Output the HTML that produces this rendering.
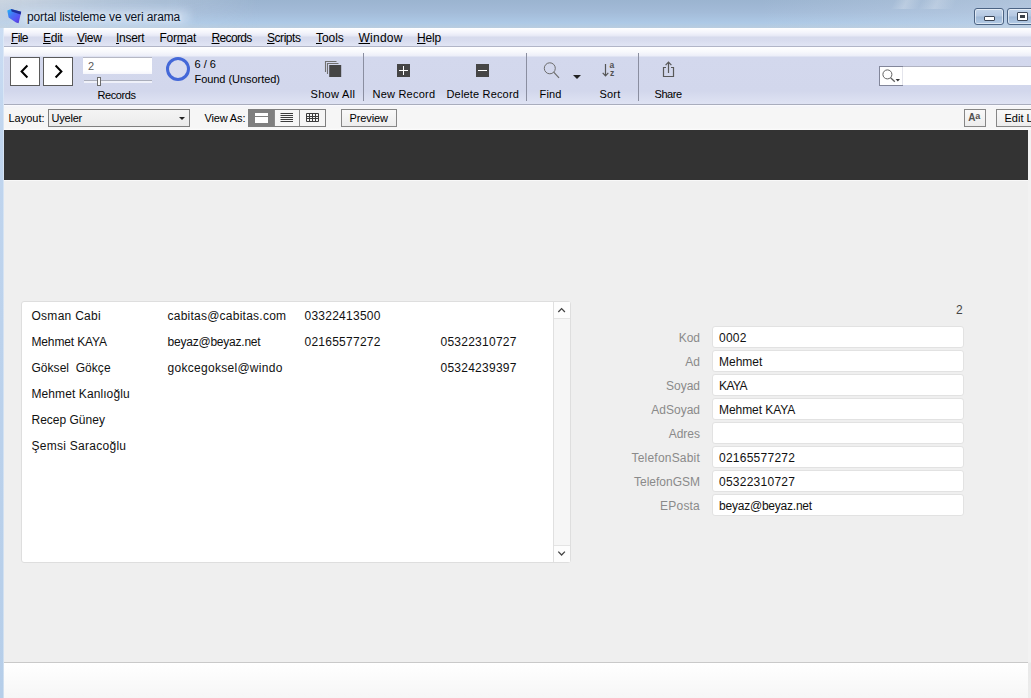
<!DOCTYPE html>
<html><head><meta charset="utf-8"><title>portal listeleme ve veri arama</title>
<style>
html,body{margin:0;padding:0;}
body{width:1031px;height:698px;overflow:hidden;position:relative;background:#efefef;font-family:"Liberation Sans",sans-serif;font-size:12px;color:#000;}
.a{position:absolute;}
.t{position:absolute;white-space:pre;line-height:14px;}
#title{left:0;top:0;width:1031px;height:28px;background:linear-gradient(#9bb4d0 0px,#a3bbd8 12px,#adc9e6 23px,#b9cddf 28px);}
#tglowl{left:0;top:0;width:260px;height:28px;background:linear-gradient(90deg,rgba(236,236,236,.6) 0px,rgba(230,232,236,.3) 110px,rgba(230,232,236,0) 260px);-webkit-mask-image:linear-gradient(to bottom,#000 0px,rgba(0,0,0,.35) 28px);mask-image:linear-gradient(to bottom,#000 0px,rgba(0,0,0,.35) 28px);}
#tglowt{left:14px;top:9px;width:176px;height:16px;background:rgba(214,228,246,.55);filter:blur(4px);border-radius:8px;}
#tglowr{left:760px;top:0;width:271px;height:28px;background:linear-gradient(90deg,rgba(200,214,232,0),rgba(200,214,232,.45));}
#tstreak{left:870px;top:0;width:120px;height:9px;background:linear-gradient(115deg,rgba(255,255,255,0) 20%,rgba(255,255,255,.22) 30%,rgba(255,255,255,0) 42%,rgba(255,255,255,.2) 55%,rgba(255,255,255,0) 70%);}
#lborder{left:0;top:28px;width:4px;height:670px;background:linear-gradient(#cbddf3 0px,#c0d5ee 110px,#bcd2ec 300px,#b6cee9 670px);box-shadow:inset -1px 0 0 rgba(255,255,255,.35);}
#rstrip{left:1028px;top:130px;width:3px;height:568px;background:linear-gradient(#f2f2f2 0px,#f2f2f2 532px,#e9e9e9 533px,#ececec 568px);}
#menubar{left:4px;top:28px;width:1027px;height:18px;background:linear-gradient(#ffffff 0px,#f2f3fb 5px,#e6e8f5 8px,#d7dbed 9px,#d9ddef 13px,#e1e5f4 18px);border-bottom:1px solid #b1b5c7;}
#toolbar{left:4px;top:47px;width:1027px;height:57px;background:linear-gradient(#ffffff 0px,#f7f8fc 5px,#eceef8 9px,#d3d8ed 10px,#d2d7ec 44px,#dfe3f3 57px);border-bottom:1px solid #a9adbd;}
#laybar{left:4px;top:105px;width:1027px;height:25px;background:linear-gradient(#fdfdff 0px,#f3f3f8 2px,#f6f6f6 3px,#f6f6f6 23px,#fbfbfb 25px);}
#dark{left:4px;top:130px;width:1024px;height:50px;background:#333333;}
#footer{left:4px;top:662px;width:1027px;height:36px;background:linear-gradient(#ffffff,#f6f6f6);border-top:1px solid #c9c9c9;box-sizing:border-box;}
.menu u{text-decoration:underline;text-underline-offset:1px;}
.navbtn{position:absolute;top:57px;width:28px;height:27px;border:1px solid #5a5a5a;background:#fff;}
.sep{position:absolute;top:53px;width:1px;height:48px;background:#8a8ea0;}
.btn{position:absolute;top:109px;height:16px;border:1px solid #868686;background:linear-gradient(#f9f9f9,#ededed);}
.fld{position:absolute;left:712px;width:252px;height:22px;background:#fff;border:1px solid #e2e2e2;border-radius:3px;box-sizing:border-box;}
.wb{position:absolute;top:8px;width:30px;height:17px;box-sizing:border-box;border:1px solid #4b6383;border-radius:3px;background:linear-gradient(#c4d5ea 0%,#b4c8e2 48%,#9fb8d6 52%,#b3cbe6 100%);box-shadow:inset 0 0 0 1px rgba(255,255,255,.55);}
</style></head><body>
<div id="title" class="a"></div><div id="tglowl" class="a"></div><div id="tglowt" class="a"></div><div id="tglowr" class="a"></div><div id="tstreak" class="a"></div>
<div id="lborder" class="a"></div>
<div id="menubar" class="a"></div>
<div id="toolbar" class="a"></div>
<div id="laybar" class="a"></div>
<div id="dark" class="a"></div>
<div class="a" style="left:4px;top:180px;width:1024px;height:1px;background:#f8f8f8;"></div>
<div id="footer" class="a"></div>
<div id="rstrip" class="a"></div>
<svg class="a" style="left:5px;top:7px" width="19" height="19" viewBox="0 0 19 19">
<defs><linearGradient id="ig" x1="0" y1="0" x2="1" y2="1"><stop offset="0" stop-color="#22b8f6"/><stop offset=".4" stop-color="#4670f4"/><stop offset=".7" stop-color="#5a50f2"/><stop offset="1" stop-color="#4a34c4"/></linearGradient></defs>
<path d="M2.3 3.6 L6 2 L16.2 4.8 L13.6 16.2 L11 15.6 L3.6 10.6 Z" fill="url(#ig)"/>
<path d="M6 2 L16.2 4.8 L15.6 7.4 L6.6 4.4 Z" fill="#1f2f9c"/>
</svg>
<div class="t" style="left:27px;top:10px;font-size:12px;letter-spacing:-0.12px;color:#0a1226;text-shadow:0 0 4px rgba(255,255,255,.7),0 0 7px rgba(255,255,255,.5);">portal listeleme ve veri arama</div>
<div class="menu">
<div class="t" style="left:11px;top:31px;font-size:12px;letter-spacing:-0.6px;"><u>F</u>ile</div>
<div class="t" style="left:43px;top:31px;font-size:12px;letter-spacing:-0.25px;"><u>E</u>dit</div>
<div class="t" style="left:77px;top:31px;font-size:12px;letter-spacing:-0.3px;"><u>V</u>iew</div>
<div class="t" style="left:116px;top:31px;font-size:12px;letter-spacing:-0.27px;"><u>I</u>nsert</div>
<div class="t" style="left:159.5px;top:31px;font-size:12px;letter-spacing:-0.25px;">For<u>m</u>at</div>
<div class="t" style="left:211.5px;top:31px;font-size:12px;letter-spacing:-0.65px;"><u>R</u>ecords</div>
<div class="t" style="left:267px;top:31px;font-size:12px;letter-spacing:-0.45px;"><u>S</u>cripts</div>
<div class="t" style="left:316px;top:31px;font-size:12px;letter-spacing:-0.05px;"><u>T</u>ools</div>
<div class="t" style="left:358.5px;top:31px;font-size:12px;letter-spacing:0.25px;"><u>W</u>indow</div>
<div class="t" style="left:417px;top:31px;font-size:12px;letter-spacing:-0.15px;"><u>H</u>elp</div>
</div>
<div class="wb" style="left:974px"></div>
<div class="a" style="left:984px;top:16px;width:11px;height:5px;border:1px solid #3c4656;background:#fff;box-sizing:border-box;border-radius:1px"></div>
<div class="wb" style="left:1007px"></div>
<div class="a" style="left:1017px;top:12px;width:11px;height:9px;border:1px solid #3c4656;background:#fff;box-sizing:border-box;border-radius:1px"></div>
<div class="a" style="left:1020px;top:15px;width:5px;height:3px;background:#3a4048;"></div>
<div class="navbtn" style="left:10px"></div>
<div class="navbtn" style="left:43px"></div>
<svg class="a" style="left:10px;top:57px" width="30" height="29" viewBox="0 0 30 29"><path d="M17.4 8.5 L11.6 14.5 L17.4 20.5" fill="none" stroke="#000" stroke-width="2"/></svg>
<svg class="a" style="left:43px;top:57px" width="30" height="29" viewBox="0 0 30 29"><path d="M12.6 8.5 L18.4 14.5 L12.6 20.5" fill="none" stroke="#000" stroke-width="2"/></svg>
<div class="a" style="left:83px;top:57px;width:69px;height:17px;background:linear-gradient(#fff 0,#fff 12px,#f3f4fb 17px);border-top:1px solid #b6b8c4;box-sizing:border-box;"></div>
<div class="a" style="left:84px;top:80px;width:68px;height:1px;background:#aaaebb;"></div>
<div class="a" style="left:84px;top:81px;width:68px;height:2px;background:#eff1f9;"></div>
<div class="a" style="left:97px;top:77px;width:4px;height:9px;border:1px solid #6c6c6c;background:#fafafa;box-sizing:border-box;"></div>
<div class="a" style="left:166px;top:57px;width:24px;height:24px;border:3px solid #4468d8;border-radius:50%;background:rgba(255,255,255,.12);box-sizing:border-box;"></div>
<div class="t" style="left:88px;top:59px;font-size:11px;color:#5a5a5a;">2</div>
<div class="t" style="left:97.5px;top:88px;font-size:11px;letter-spacing:-0.4px;">Records</div>
<div class="t" style="left:194.5px;top:57px;font-size:11px;">6 / 6</div>
<div class="t" style="left:194.5px;top:72px;font-size:11px;letter-spacing:-0.05px;">Found (Unsorted)</div>
<svg class="a" style="left:324px;top:60px" width="20" height="19" viewBox="0 0 20 19"><path d="M1.5 12 V1.5 H12.5" stroke="#707070" fill="none" stroke-width="1.1"/><path d="M3.5 14 V3.5 H14.5" stroke="#707070" fill="none" stroke-width="1.1"/><rect x="5.2" y="5" width="12" height="12" fill="#454545"/></svg>
<div class="t" style="left:310.5px;top:87px;font-size:11px;letter-spacing:0.33px;">Show All</div>
<div class="sep" style="left:363px"></div>
<div class="a" style="left:397px;top:64px;width:13px;height:13px;background:#454545;"></div>
<div class="a" style="left:399px;top:70px;width:9px;height:1px;background:#fff;"></div>
<div class="a" style="left:403px;top:66px;width:1px;height:9px;background:#fff;"></div>
<div class="t" style="left:372.5px;top:87px;font-size:11px;letter-spacing:0.22px;">New Record</div>
<div class="a" style="left:476px;top:64px;width:13px;height:13px;background:#454545;"></div>
<div class="a" style="left:478px;top:70px;width:9px;height:1px;background:#fff;"></div>
<div class="t" style="left:446.5px;top:87px;font-size:11px;letter-spacing:0.17px;">Delete Record</div>
<div class="sep" style="left:526px"></div>
<svg class="a" style="left:541px;top:61px" width="20" height="20" viewBox="0 0 20 20"><circle cx="8.8" cy="7.3" r="5.5" fill="none" stroke="#6c6c6c" stroke-width="1"/><path d="M12.7 11.2 L18 16.8" stroke="#6c6c6c" stroke-width="1.2"/></svg>
<div class="a" style="left:572.5px;top:75px;width:0;height:0;border-left:4px solid transparent;border-right:4px solid transparent;border-top:4px solid #222;"></div>
<div class="t" style="left:539.5px;top:87px;font-size:11px;letter-spacing:0.17px;">Find</div>
<svg class="a" style="left:600px;top:61px" width="20" height="18" viewBox="0 0 20 18"><path d="M5.5 3 V14.6 M2.7 11.8 L5.5 14.8 L8.3 11.8" fill="none" stroke="#555" stroke-width="1.2"/><text x="9.6" y="7.3" font-size="8.5" font-weight="bold" font-family="Liberation Sans, sans-serif" fill="#505050">a</text><text x="10" y="14.5" font-size="8.5" font-weight="bold" font-family="Liberation Sans, sans-serif" fill="#505050">z</text></svg>
<div class="t" style="left:599.5px;top:87px;font-size:11px;letter-spacing:0.2px;">Sort</div>
<div class="sep" style="left:638px"></div>
<svg class="a" style="left:659px;top:60px" width="18" height="20" viewBox="0 0 18 20"><path d="M7 7.5 H4.5 V16.5 H14.5 V7.5 H12" fill="none" stroke="#585858" stroke-width="1.2"/><path d="M9.5 13 V2.4 M6.6 5.2 L9.5 2.2 L12.4 5.2" fill="none" stroke="#585858" stroke-width="1.2"/></svg>
<div class="t" style="left:654.5px;top:87px;font-size:11px;letter-spacing:-0.45px;">Share</div>
<div class="a" style="left:879px;top:66px;width:24px;height:20px;background:#fff;border:1px solid #82869a;border-right:none;box-sizing:border-box;"></div>
<div class="a" style="left:903px;top:66px;width:128px;height:19px;background:#fff;border-top:1px solid #b0b3c2;box-sizing:border-box;"></div>
<div class="a" style="left:902px;top:67px;width:1px;height:18px;background:#e4e5ec;"></div>
<svg class="a" style="left:880px;top:68px" width="22" height="16" viewBox="0 0 22 16"><circle cx="7.4" cy="6.4" r="4.5" fill="none" stroke="#606060"/><path d="M10.6 9.8 L14.8 13.7" stroke="#606060" stroke-width="1.3"/><path d="M15.6 11 h4.4 l-2.2 2.6z" fill="#333"/></svg>
<div class="t" style="left:8.5px;top:111px;font-size:11px;">Layout:</div>
<div class="a" style="left:48px;top:109px;width:142px;height:18px;border:1px solid #7e7e7e;background:linear-gradient(#f4f4f4,#ebebeb);box-sizing:border-box;"></div>
<div class="t" style="left:51.5px;top:111px;font-size:11px;letter-spacing:-0.2px;">Uyeler</div>
<div class="a" style="left:179px;top:117px;width:0;height:0;border-left:3px solid transparent;border-right:3px solid transparent;border-top:3px solid #222;"></div>
<div class="t" style="left:204.5px;top:111px;font-size:11px;letter-spacing:-0.15px;">View As:</div>
<div class="a" style="left:248px;top:109px;width:78px;height:18px;border:1px solid #7e7e7e;background:#f6f6f6;box-sizing:border-box;"></div>
<div class="a" style="left:249px;top:110px;width:25px;height:16px;background:#7f7f7f;"></div>
<div class="a" style="left:274px;top:110px;width:1px;height:16px;background:#8a8a8a;"></div>
<div class="a" style="left:299px;top:110px;width:1px;height:16px;background:#8a8a8a;"></div>
<div class="a" style="left:255px;top:113px;width:13px;height:10px;background:#fff;"></div>
<div class="a" style="left:255px;top:116px;width:13px;height:1px;background:#7f7f7f;"></div>
<svg class="a" style="left:279px;top:112px" width="16" height="12" viewBox="0 0 16 12"><path d="M1.5 1.5 H14 M1.5 3.5 H14 M1.5 5.5 H14 M1.5 7.5 H14 M1.5 9.5 H14" stroke="#3c3c3c"/></svg>
<svg class="a" style="left:305px;top:112px" width="16" height="12" viewBox="0 0 16 12"><path d="M1.5 1.5 H13.5 V9.5 H1.5 Z M1.5 4.5 H13.5 M1.5 6.5 H13.5 M4.5 1.5 V9.5 M7.5 1.5 V9.5 M10.5 1.5 V9.5" stroke="#3c3c3c" fill="none"/></svg>
<div class="btn" style="left:341px;width:54px;"></div>
<div class="btn" style="left:964px;width:20px;"></div>
<div class="btn" style="left:996px;width:40px;"></div>
<div class="t" style="left:349.5px;top:111px;font-size:11px;letter-spacing:-0.1px;">Preview</div>
<div class="t" style="left:968.3px;top:111px;font-size:10px;color:#505050;font-weight:bold;">A</div>
<div class="t" style="left:975.3px;top:109px;font-size:9px;color:#505050;font-weight:bold;">a</div>
<div class="t" style="left:1004.5px;top:111px;font-size:11px;">Edit Layout</div>
<div class="a" style="left:21px;top:301px;width:550px;height:262px;background:#fff;border:1px solid #dedede;border-radius:3px;box-sizing:border-box;"></div>
<div class="a" style="left:554px;top:302px;width:16px;height:260px;background:#f6f6f6;border-radius:0 2px 2px 0;"></div>
<div class="a" style="left:553px;top:302px;width:1px;height:260px;background:#e0e0e0;"></div>
<div class="a" style="left:554px;top:302px;width:16px;height:16px;background:#fdfdfd;border-bottom:1px solid #e4e4e4;"></div>
<div class="a" style="left:554px;top:545px;width:16px;height:17px;background:#fdfdfd;border-top:1px solid #e4e4e4;box-sizing:border-box;"></div>
<svg class="a" style="left:556px;top:305px" width="12" height="10" viewBox="0 0 12 10"><path d="M2.3 7 L5.6 3.6 L8.9 7" fill="none" stroke="#444" stroke-width="1.3"/></svg>
<svg class="a" style="left:556px;top:548px" width="12" height="10" viewBox="0 0 12 10"><path d="M2.3 3.6 L5.6 7 L8.9 3.6" fill="none" stroke="#444" stroke-width="1.3"/></svg>
<div class="t" style="left:31.5px;top:309px;font-size:12px;letter-spacing:0.27px;color:#111;">Osman Cabi</div>
<div class="t" style="left:167.5px;top:309px;font-size:12px;letter-spacing:0.24px;color:#111;">cabitas@cabitas.com</div>
<div class="t" style="left:304.5px;top:309px;font-size:12px;letter-spacing:0.25px;color:#111;">03322413500</div>
<div class="t" style="left:31.5px;top:335px;font-size:12px;letter-spacing:-0.15px;color:#111;">Mehmet KAYA</div>
<div class="t" style="left:167.5px;top:335px;font-size:12px;letter-spacing:-0.22px;color:#111;">beyaz@beyaz.net</div>
<div class="t" style="left:304.5px;top:335px;font-size:12px;letter-spacing:0.25px;color:#111;">02165577272</div>
<div class="t" style="left:440.5px;top:335px;font-size:12px;letter-spacing:0.25px;color:#111;">05322310727</div>
<div class="t" style="left:31.5px;top:361px;font-size:12px;letter-spacing:0.03px;color:#111;">Göksel  Gökçe</div>
<div class="t" style="left:167.5px;top:361px;font-size:12px;letter-spacing:0.29px;color:#111;">gokcegoksel@windo</div>
<div class="t" style="left:440.5px;top:361px;font-size:12px;letter-spacing:0.25px;color:#111;">05324239397</div>
<div class="t" style="left:31.5px;top:387px;font-size:12px;letter-spacing:0.09px;color:#111;">Mehmet Kanlıoğlu</div>
<div class="t" style="left:31.5px;top:413px;font-size:12px;color:#111;">Recep Güney</div>
<div class="t" style="left:31.5px;top:439px;font-size:12px;letter-spacing:0.27px;color:#111;">Şemsi Saracoğlu</div>
<div class="t" style="left:956px;top:303px;font-size:12px;color:#454545;">2</div>
<div class="fld" style="top:326px"></div>
<div class="t" style="right:331px;top:331px;font-size:12px;color:#8a8a8a;">Kod</div>
<div class="t" style="left:719px;top:331px;font-size:12px;letter-spacing:0.25px;color:#111;">0002</div>
<div class="fld" style="top:350px"></div>
<div class="t" style="right:331px;top:355px;font-size:12px;color:#8a8a8a;">Ad</div>
<div class="t" style="left:719px;top:355px;font-size:12px;color:#111;">Mehmet</div>
<div class="fld" style="top:374px"></div>
<div class="t" style="right:331px;top:379px;font-size:12px;color:#8a8a8a;">Soyad</div>
<div class="t" style="left:719px;top:379px;font-size:12px;letter-spacing:-0.6px;color:#111;">KAYA</div>
<div class="fld" style="top:398px"></div>
<div class="t" style="right:331px;top:403px;font-size:12px;color:#8a8a8a;">AdSoyad</div>
<div class="t" style="left:719px;top:403px;font-size:12px;letter-spacing:-0.07px;color:#111;">Mehmet KAYA</div>
<div class="fld" style="top:422px"></div>
<div class="t" style="right:331px;top:427px;font-size:12px;color:#8a8a8a;">Adres</div>
<div class="fld" style="top:446px"></div>
<div class="t" style="right:331px;top:451px;font-size:12px;letter-spacing:0.2px;color:#8a8a8a;">TelefonSabit</div>
<div class="t" style="left:719px;top:451px;font-size:12px;letter-spacing:0.25px;color:#111;">02165577272</div>
<div class="fld" style="top:470px"></div>
<div class="t" style="right:331px;top:475px;font-size:12px;color:#8a8a8a;">TelefonGSM</div>
<div class="t" style="left:719px;top:475px;font-size:12px;letter-spacing:0.25px;color:#111;">05322310727</div>
<div class="fld" style="top:494px"></div>
<div class="t" style="right:331px;top:499px;font-size:12px;letter-spacing:0.2px;color:#8a8a8a;">EPosta</div>
<div class="t" style="left:719px;top:499px;font-size:12px;letter-spacing:-0.22px;color:#111;">beyaz@beyaz.net</div>
</body></html>
